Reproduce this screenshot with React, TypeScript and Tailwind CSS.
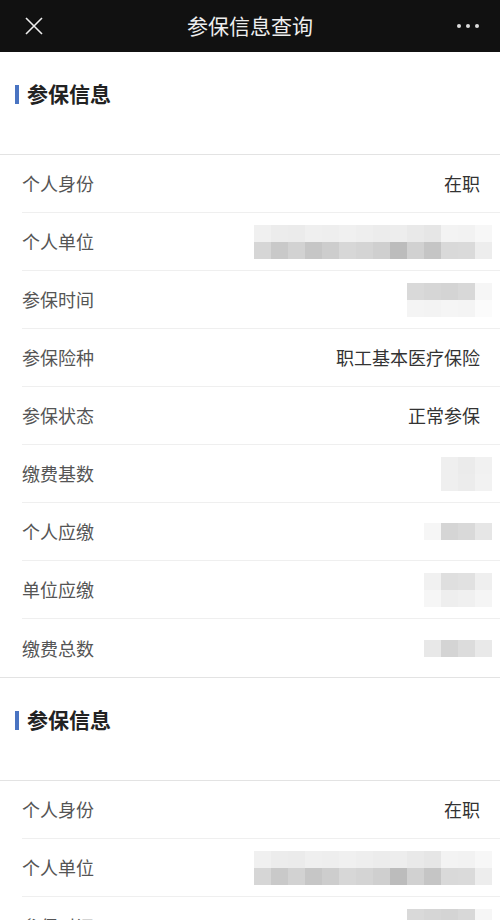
import React from 'react';

type Mosaic = { x: number; w: number; rows: { h: number; cells: string[] }[] };

interface Row {
  label: string;
  value?: string;
  mosaic?: Mosaic;
}

// pixelated (hidden) values, coordinates are relative to the right edge area
const unitMosaic: Mosaic = {
  x: 0,
  w: 17,
  rows: [
    { h: 17, cells: ['#f0f0f0', '#ececec', '#ebebeb', '#efefef', '#eeeeee', '#f0f0f0', '#eeeeee', '#ececec', '#ededed', '#e9e9e9', '#e6e6e6', '#f3f3f3', '#f2f2f2', '#f7f7f7'] },
    { h: 17, cells: ['#d6d6d6', '#c9c9c9', '#d2d2d2', '#c6c6c6', '#cdcdcd', '#d7d7d7', '#d4d4d4', '#cfcfcf', '#bcbcbc', '#d1d1d1', '#c5c5c5', '#d9d9d9', '#dadada', '#ededed'] },
  ],
};

function MosaicBlock({ m }: { m: Mosaic }) {
  return (
    <div className="flex flex-col">
      {m.rows.map((r, i) => (
        <div key={i} className="flex">
          {r.cells.map((c, j) => (
            <div key={j} style={{ width: m.w, height: r.h, background: c }} />
          ))}
        </div>
      ))}
    </div>
  );
}

const rows1: Row[] = [
  { label: '个人身份', value: '在职' },
  { label: '个人单位', mosaic: unitMosaic },
  {
    label: '参保时间',
    mosaic: {
      x: 0, w: 17,
      rows: [
        { h: 17, cells: ['#d9d9d9', '#d6d6d6', '#d4d4d4', '#d8d8d8', '#f6f6f6'] },
        { h: 17, cells: ['#f4f4f4', '#f3f3f3', '#f5f5f5', '#f4f4f4', '#fbfbfb'] },
      ],
    },
  },
  { label: '参保险种', value: '职工基本医疗保险' },
  { label: '参保状态', value: '正常参保' },
  {
    label: '缴费基数',
    mosaic: {
      x: 0, w: 17,
      rows: [
        { h: 17, cells: ['#efefef', '#ebebeb', '#f1f1f1'] },
        { h: 17, cells: ['#efefef', '#ececec', '#f2f2f2'] },
      ],
    },
  },
  {
    label: '个人应缴',
    mosaic: {
      x: 0, w: 17,
      rows: [{ h: 17, cells: ['#f6f6f6', '#d5d5d5', '#d9d9d9', '#e6e6e6'] }],
    },
  },
  {
    label: '单位应缴',
    mosaic: {
      x: 0, w: 17,
      rows: [
        { h: 17, cells: ['#f1f1f1', '#dfdfdf', '#e1e1e1', '#efefef'] },
        { h: 17, cells: ['#f6f6f6', '#eeeeee', '#f0f0f0', '#f5f5f5'] },
      ],
    },
  },
  {
    label: '缴费总数',
    mosaic: {
      x: 0, w: 17,
      rows: [{ h: 17, cells: ['#e8e8e8', '#d4d4d4', '#dcdcdc', '#e9e9e9'] }],
    },
  },
];

const rows2: Row[] = rows1.slice(0, 3);

function Section({ rows }: { rows: Row[] }) {
  return (
    <div>
      <div className="h-[103px] pt-[30px] px-[15px] border-b border-[#e3e3e3]">
        <div className="flex items-center h-6">
          <div className="w-[4px] h-[19px] bg-[#4a74c2] mr-[8px]" />
          <span className="text-[21px] font-bold text-[#222]">参保信息</span>
        </div>
      </div>
      <div>
        {rows.map((r, i) => (
          <div key={i} className={i === rows.length - 1 ? 'border-b border-[#e3e3e3]' : ''}>
            <div className={`ml-[22px] h-[58px] flex items-center justify-between pr-[20px] ${i === rows.length - 1 ? '' : 'border-b border-[#efefef]'}`}>
              <span className="text-[18px] text-[#555]">{r.label}</span>
              {r.value && <span className="text-[18px] text-[#333]">{r.value}</span>}
              {r.mosaic && (
                <div className="-mr-[12px]">
                  <MosaicBlock m={r.mosaic} />
                </div>
              )}
            </div>
          </div>
        ))}
      </div>
    </div>
  );
}

export default function App() {
  return (
    <div
      className="w-[500px] h-[920px] overflow-hidden bg-white"
      style={{ fontFamily: '"Noto Sans CJK SC", "Noto Sans", sans-serif' }}
    >
      <div className="h-[52px] bg-[#111] flex items-center justify-between px-[25px] relative">
        <svg width="18" height="18" viewBox="0 0 18 18" className="text-[#eee]">
          <path d="M1 1L17 17M17 1L1 17" stroke="currentColor" strokeWidth="1.6" />
        </svg>
        <span className="absolute left-0 right-0 text-center text-[21px] text-[#eee] pointer-events-none">参保信息查询</span>
        <div className="flex gap-[5px] mr-[-4px]">
          <span className="w-[4px] h-[4px] rounded-full bg-[#ddd]" />
          <span className="w-[4px] h-[4px] rounded-full bg-[#ddd]" />
          <span className="w-[4px] h-[4px] rounded-full bg-[#ddd]" />
        </div>
      </div>
      <Section rows={rows1} />
      <Section rows={rows2} />
    </div>
  );
}
